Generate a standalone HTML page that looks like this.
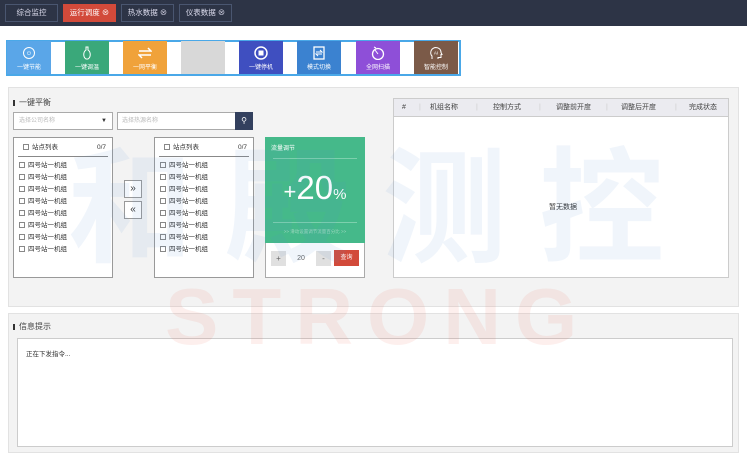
<!DOCTYPE html><html><head><meta charset="utf-8"><style>
*{box-sizing:border-box;margin:0;padding:0}
body{width:747px;height:457px;background:#fff;font-family:"Liberation Sans","Noto Sans CJK SC",sans-serif;font-size:7px;color:#333;position:relative;overflow:hidden}
.a{position:absolute}
.top{left:0;top:0;width:747px;height:26px;background:#2d3446}
.tab{top:4px;height:18px;border:1px solid #4a5670;color:#dde;font-size:7.5px;line-height:16px;text-align:center}
.tb{left:6px;top:40px;width:455px;height:36px;border:2px solid #4aa8e8;background:#fff}
.btn{top:41px;width:44px;height:33px;color:#fff;font-size:6px;text-align:center}
.btn .ic{display:block;margin:5px auto 2px;width:14px;height:14px}
.panel{background:#f3f3f3;border:1px solid #e2e2e2}
.ttl{font-size:8px;color:#444}
.ttl:before{content:"";display:inline-block;width:2px;height:6px;background:#333;margin-right:4px;vertical-align:middle}
.box{background:#fff;border:1px solid #999}
.li{font-size:6.5px;line-height:12px;padding-left:5px}
.li:before{content:"";display:inline-block;width:4px;height:4px;border:1px solid #888;margin-right:3px;vertical-align:middle}
.wm{pointer-events:none;z-index:10}
</style></head><body>
<div class="a top"></div>
<div class="a tab" style="left:5px;width:53px">综合监控</div>
<div class="a tab" style="left:63px;width:53px;background:#d24a3a;border-color:#d24a3a;color:#fff">运行调度 ⊗</div>
<div class="a tab" style="left:121px;width:53px">热水数据 ⊗</div>
<div class="a tab" style="left:179px;width:53px">仪表数据 ⊗</div>

<div class="a tb"></div>
<div class="a btn" style="left:7px;background:#5aa6e8"><svg class="ic" viewBox="0 0 14 14"><circle cx="7" cy="7" r="5.5" fill="none" stroke="#fff"/><text x="7" y="9" font-size="5" fill="#fff" text-anchor="middle">⏻</text></svg>一键节能</div>
<div class="a btn" style="left:65px;background:#3aa87a"><svg class="ic" viewBox="0 0 14 14"><path d="M6 1h2v3c3 2 3 7 0 9H6c-3-2-3-7 0-9z" fill="none" stroke="#fff"/></svg>一键调温</div>
<div class="a btn" style="left:123px;background:#f0a23a"><svg class="ic" viewBox="0 0 14 14"><path d="M1 5h12l-3-3M13 9H1l3 3" fill="none" stroke="#fff" stroke-width="1.5"/></svg>一网平衡</div>
<div class="a btn" style="left:181px;background:#d8d8d8"></div>
<div class="a btn" style="left:239px;background:#3f4fc0"><svg class="ic" viewBox="0 0 14 14"><circle cx="7" cy="7" r="6" fill="none" stroke="#fff" stroke-width="1.5"/><rect x="4.5" y="4.5" width="5" height="5" fill="#fff"/></svg>一键停机</div>
<div class="a btn" style="left:297px;background:#3b82d0"><svg class="ic" viewBox="0 0 14 14"><rect x="2" y="1" width="10" height="12" fill="none" stroke="#fff" stroke-width="1.3"/><path d="M4 6h6l-2-2M10 8H4l2 2" fill="none" stroke="#fff"/></svg>模式切换</div>
<div class="a btn" style="left:356px;background:#8e4fd8"><svg class="ic" viewBox="0 0 14 14"><circle cx="7" cy="8" r="5.5" fill="none" stroke="#fff" stroke-width="1.3"/><path d="M7 8L4 4M3 1l2 1" stroke="#fff"/></svg>全网扫描</div>
<div class="a btn" style="left:414px;background:#7b5a48"><svg class="ic" viewBox="0 0 14 14"><path d="M3 13V10C1 8 1 3 6 1.5c4 0 6 2 6 5l1 2h-1v3H9v1.5" fill="none" stroke="#fff"/><text x="7" y="8.5" font-size="4.5" fill="#fff" text-anchor="middle">AI</text></svg>智能控制</div>

<div class="a panel" style="left:8px;top:87px;width:731px;height:220px"></div>
<div class="a ttl" style="left:13px;top:97px">一键平衡</div>
<div class="a box" style="left:13px;top:112px;width:100px;height:18px;border-color:#aaa;color:#bbb;font-size:6px;line-height:16px;padding-left:5px">选择公司名称<span style="position:absolute;right:5px;color:#333">▼</span></div>
<div class="a box" style="left:117px;top:112px;width:119px;height:18px;border-color:#aaa;color:#bbb;font-size:6px;line-height:16px;padding-left:4px">选择热源名称</div>
<div class="a" style="left:235px;top:112px;width:18px;height:18px;background:#33405e;color:#fff;text-align:center;line-height:17px;font-size:8px">⚲</div>

<div class="a box" style="left:13px;top:137px;width:100px;height:141px"><div style="margin:4px 4px 0;border-bottom:1px solid #888;height:15px;line-height:12px" class="li">站点列表<span style="float:right;padding-right:2px">0/7</span></div><div style="margin-top:3px"><div class="li">四号站一机组</div><div class="li">四号站一机组</div><div class="li">四号站一机组</div><div class="li">四号站一机组</div><div class="li">四号站一机组</div><div class="li">四号站一机组</div><div class="li">四号站一机组</div><div class="li">四号站一机组</div></div></div>
<div class="a box" style="left:124px;top:180px;width:18px;height:18px;text-align:center;line-height:16px;font-size:10px;background:#fff">»</div>
<div class="a box" style="left:124px;top:201px;width:18px;height:18px;text-align:center;line-height:16px;font-size:10px;background:#fff">«</div>
<div class="a box" style="left:154px;top:137px;width:100px;height:141px"><div style="margin:4px 4px 0;border-bottom:1px solid #888;height:15px;line-height:12px" class="li">站点列表<span style="float:right;padding-right:2px">0/7</span></div><div style="margin-top:3px"><div class="li">四号站一机组</div><div class="li">四号站一机组</div><div class="li">四号站一机组</div><div class="li">四号站一机组</div><div class="li">四号站一机组</div><div class="li">四号站一机组</div><div class="li">四号站一机组</div><div class="li">四号站一机组</div></div></div>

<div class="a" style="left:265px;top:137px;width:100px;height:141px;background:#fff;border:1px solid #aaa"></div>
<div class="a" style="left:265px;top:137px;width:100px;height:106px;background:#45b98a;color:#fff">
<div style="font-size:6px;padding:6px 0 0 6px">流量调节</div>
<div style="margin:6px 8px 0;border-top:1px solid #7dd0ad"></div>
<div style="text-align:center;font-size:33px;line-height:44px;margin-top:7px"><span style="font-size:22px">+</span>20<span style="font-size:15px">%</span></div>
<div style="margin:5px 8px 0;border-top:1px solid #7dd0ad"></div>
<div style="font-size:4.5px;color:#9dd8bf;text-align:center;margin-top:6px">&gt;&gt; 滑动设置调节流量百分比 &gt;&gt;</div></div>
<div class="a" style="left:271px;top:251px;width:15px;height:15px;background:#e0e0e0;text-align:center;line-height:15px;font-size:8px;color:#666">+</div>
<div class="a" style="left:286px;top:251px;width:30px;height:15px;background:#fff;text-align:center;line-height:15px;font-size:7px;color:#666">20</div>
<div class="a" style="left:316px;top:251px;width:15px;height:15px;background:#e0e0e0;text-align:center;line-height:15px;font-size:8px;color:#666">-</div>
<div class="a" style="left:334px;top:250px;width:25px;height:16px;background:#d24a3a;color:#fff;text-align:center;line-height:16px;font-size:6px">查询</div>

<div class="a box" style="left:393px;top:98px;width:336px;height:180px;border-color:#ccc"></div>
<div class="a" style="left:394px;top:99px;width:334px;height:18px;background:#ebebf0;border-bottom:1px solid #ccc;font-size:7px;color:#444;line-height:17px">
<span class="a" style="left:8px">#</span><span class="a" style="left:36px">机组名称</span><span class="a" style="left:99px">控制方式</span><span class="a" style="left:162px">调整前开度</span><span class="a" style="left:227px">调整后开度</span><span class="a" style="left:295px">完成状态</span>
<span class="a" style="left:25px;color:#ccc">|</span><span class="a" style="left:82px;color:#ccc">|</span><span class="a" style="left:145px;color:#ccc">|</span><span class="a" style="left:212px;color:#ccc">|</span><span class="a" style="left:281px;color:#ccc">|</span></div>
<div class="a" style="left:549px;top:202px;font-size:7px">暂无数据</div>

<div class="a panel" style="left:8px;top:313px;width:731px;height:140px"></div>
<div class="a ttl" style="left:13px;top:321px">信息提示</div>
<div class="a box" style="left:17px;top:338px;width:716px;height:109px;border-color:#ccc"><div style="padding:9px 0 0 8px;font-size:6.5px">正在下发指令...</div></div>

<div class="a wm" style="left:68px;top:118px;font-size:125px;font-weight:bold;color:rgba(90,140,210,0.09);letter-spacing:32px;font-family:'Noto Sans CJK SC',sans-serif;line-height:160px;white-space:nowrap">和殿测控</div>
<div class="a wm" style="left:165px;top:272px;font-size:80px;font-weight:bold;color:rgba(235,110,90,0.11);letter-spacing:14px;line-height:90px;font-family:'Liberation Sans',sans-serif;white-space:nowrap">STRONG</div>
</body></html>
